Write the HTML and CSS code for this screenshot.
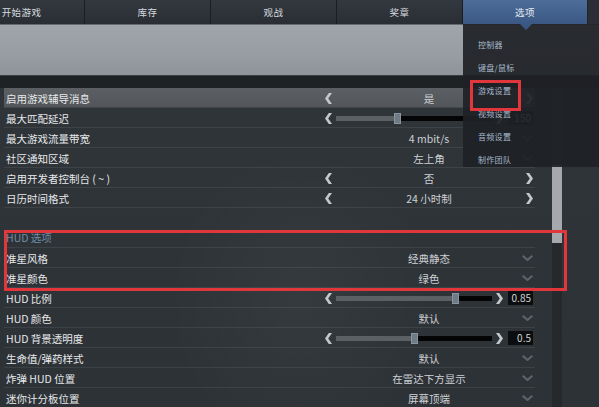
FILE: index.html
```html
<!DOCTYPE html>
<html lang="zh-CN">
<head>
<meta charset="utf-8">
<title>选项 - 游戏设置</title>
<link rel="stylesheet" href="styles.css">
</head>
<body>
<div class="screen">
  <nav class="nav">
    <div class="tab">开始游戏</div>
    <div class="tab">库存</div>
    <div class="tab">观战</div>
    <div class="tab">奖章</div>
    <div class="tab active">选项</div>
    <div class="tab rest"></div>
  </nav>
  <div class="banner"></div>
  <div class="strip"></div>

  <div class="content">
    <div class="list">
      <div class="group">
        <div class="row hl">
          <span class="label">启用游戏辅导消息</span>
          <div class="ctl">
            <svg class="arr l" viewBox="0 0 7 11"><polygon points="7,0 3.2,5.5 7,11 3.8,11 0,5.5 3.8,0"/></svg>
            <span class="val">是</span>
            <svg class="arr r" viewBox="0 0 7 11"><polygon points="0,0 3.8,5.5 0,11 3.2,11 7,5.5 3.2,0"/></svg>
          </div>
        </div>
        <div class="row">
          <span class="label">最大匹配延迟</span>
          <div class="slider">
            <svg class="arr" viewBox="0 0 7 11"><polygon points="7,0 3.2,5.5 7,11 3.8,11 0,5.5 3.8,0"/></svg>
            <div class="track"><div class="fill" style="width:39%"><div class="thumb"></div></div></div>
            <svg class="arr" viewBox="0 0 7 11"><polygon points="0,0 3.8,5.5 0,11 3.2,11 7,5.5 3.2,0"/></svg>
            <span class="num">150</span>
          </div>
        </div>
        <div class="row">
          <span class="label">最大游戏流量带宽</span>
          <div class="ctl">
            <span class="val">4 mbit/s</span>
            <svg class="chev" viewBox="0 0 11 6"><polyline points="0.7,0.7 5.5,5 10.3,0.7"/></svg>
          </div>
        </div>
        <div class="row">
          <span class="label">社区通知区域</span>
          <div class="ctl">
            <span class="val">左上角</span>
            <svg class="chev" viewBox="0 0 11 6"><polyline points="0.7,0.7 5.5,5 10.3,0.7"/></svg>
          </div>
        </div>
        <div class="row">
          <span class="label">启用开发者控制台 ( ~ )</span>
          <div class="ctl">
            <svg class="arr l" viewBox="0 0 7 11"><polygon points="7,0 3.2,5.5 7,11 3.8,11 0,5.5 3.8,0"/></svg>
            <span class="val">否</span>
            <svg class="arr r" viewBox="0 0 7 11"><polygon points="0,0 3.8,5.5 0,11 3.2,11 7,5.5 3.2,0"/></svg>
          </div>
        </div>
        <div class="row">
          <span class="label">日历时间格式</span>
          <div class="ctl">
            <svg class="arr l" viewBox="0 0 7 11"><polygon points="7,0 3.2,5.5 7,11 3.8,11 0,5.5 3.8,0"/></svg>
            <span class="val">24 小时制</span>
            <svg class="arr r" viewBox="0 0 7 11"><polygon points="0,0 3.8,5.5 0,11 3.2,11 7,5.5 3.2,0"/></svg>
          </div>
        </div>
      </div>

      <div class="group">
        <div class="row head"><span class="label">HUD 选项</span></div>
        <div class="row">
          <span class="label">准星风格</span>
          <div class="ctl">
            <span class="val">经典静态</span>
            <svg class="chev" viewBox="0 0 11 6"><polyline points="0.7,0.7 5.5,5 10.3,0.7"/></svg>
          </div>
        </div>
        <div class="row">
          <span class="label">准星颜色</span>
          <div class="ctl">
            <span class="val">绿色</span>
            <svg class="chev" viewBox="0 0 11 6"><polyline points="0.7,0.7 5.5,5 10.3,0.7"/></svg>
          </div>
        </div>
        <div class="row">
          <span class="label">HUD 比例</span>
          <div class="slider">
            <svg class="arr" viewBox="0 0 7 11"><polygon points="7,0 3.2,5.5 7,11 3.8,11 0,5.5 3.8,0"/></svg>
            <div class="track"><div class="fill" style="width:76%"><div class="thumb"></div></div></div>
            <svg class="arr" viewBox="0 0 7 11"><polygon points="0,0 3.8,5.5 0,11 3.2,11 7,5.5 3.2,0"/></svg>
            <span class="num">0.85</span>
          </div>
        </div>
        <div class="row">
          <span class="label">HUD 颜色</span>
          <div class="ctl">
            <span class="val">默认</span>
            <svg class="chev" viewBox="0 0 11 6"><polyline points="0.7,0.7 5.5,5 10.3,0.7"/></svg>
          </div>
        </div>
        <div class="row">
          <span class="label">HUD 背景透明度</span>
          <div class="slider">
            <svg class="arr" viewBox="0 0 7 11"><polygon points="7,0 3.2,5.5 7,11 3.8,11 0,5.5 3.8,0"/></svg>
            <div class="track"><div class="fill" style="width:50%"><div class="thumb"></div></div></div>
            <svg class="arr" viewBox="0 0 7 11"><polygon points="0,0 3.8,5.5 0,11 3.2,11 7,5.5 3.2,0"/></svg>
            <span class="num">0.5</span>
          </div>
        </div>
        <div class="row">
          <span class="label">生命值/弹药样式</span>
          <div class="ctl">
            <span class="val">默认</span>
            <svg class="chev" viewBox="0 0 11 6"><polyline points="0.7,0.7 5.5,5 10.3,0.7"/></svg>
          </div>
        </div>
        <div class="row">
          <span class="label">炸弹 HUD 位置</span>
          <div class="ctl">
            <span class="val">在雷达下方显示</span>
            <svg class="chev" viewBox="0 0 11 6"><polyline points="0.7,0.7 5.5,5 10.3,0.7"/></svg>
          </div>
        </div>
        <div class="row">
          <span class="label">迷你计分板位置</span>
          <div class="ctl">
            <span class="val">屏幕顶端</span>
            <svg class="chev" viewBox="0 0 11 6"><polyline points="0.7,0.7 5.5,5 10.3,0.7"/></svg>
          </div>
        </div>
      </div>
    </div>

    <div class="scroll"><div class="thumb-bar"></div></div>
  </div>

  <div class="menu">
    <span class="notch"></span>
    <div class="item">控制器</div>
    <div class="item">键盘/鼠标</div>
    <div class="item">游戏设置</div>
    <div class="item">视频设置</div>
    <div class="item">音频设置</div>
    <div class="item">制作团队</div>
  </div>

  <div class="mark mark-menu"></div>
  <div class="mark mark-hud"></div>
</div>
</body>
</html>
```

FILE: styles.css
```css
* { box-sizing: border-box; }

html, body {
  margin: 0;
  padding: 0;
  background: #2f3439;
}

.screen {
  position: relative;
  width: 599px;
  height: 407px;
  overflow: hidden;
  font-family: "Noto Sans CJK SC", "Noto Sans", "Liberation Sans", sans-serif;
  color: #e2e5e8;
  background:
    radial-gradient(ellipse 190px 220px at 300px 300px, rgba(255,255,255,0.035), rgba(255,255,255,0) 70%),
    linear-gradient(180deg, #30353a 0%, #2d3237 100%);
}

/* top navigation */
.nav {
  display: flex;
  height: 24px;
  margin-left: -41px;
  background: linear-gradient(180deg, #333840 0%, #2a2e34 100%);
}
.tab {
  flex: 0 0 126px;
  height: 24px;
  display: flex;
  align-items: center;
  justify-content: center;
  font-size: 9.5px;
  letter-spacing: 0.4px;
  color: #d6dadf;
  border-right: 1px solid #1a1d21;
}
.tab.active {
  flex-basis: 125px;
  background: linear-gradient(180deg, #4d6e99 0%, #3a5883 100%);
  color: #e8edf3;
  border-right: 1px solid #20252b;
}
.tab.rest { flex: 1 0 auto; border-right: 0; background: #2b2f35; }

.banner {
  height: 51px;
  border-top: 1px solid #646a70;
  background: linear-gradient(180deg, #a0a5ab 0%, #989da3 60%, #8f949a 100%);
}
.strip {
  height: 13px;
  background: #1f2225;
  border-top: 1px solid #3a3e42;
}

/* settings list */
.content {
  display: flex;
  align-items: stretch;
  height: 319px;
}
.list {
  width: 531px;
  margin-left: 4px;
  display: flex;
  flex-direction: column;
  gap: 20px;
}
.row {
  display: grid;
  grid-template-columns: 318px 213px;
  align-items: center;
  height: 20px;
  border-bottom: 1px solid rgba(255,255,255,0.075);
}
.row.hl {
  background: linear-gradient(180deg, #5c6064 0%, #52565a 100%);
  border-bottom-color: rgba(0,0,0,0.25);
}
.label {
  padding-left: 2px;
  font-size: 10.5px;
  color: #e6e8ea;
  white-space: nowrap;
}
.row.head .label { color: #6f8ea7; }

.ctl {
  display: grid;
  grid-template-columns: 11px 1fr 11px;
  align-items: center;
  height: 20px;
  padding: 0 2px 0 3px;
}
.val {
  grid-column: 2;
  text-align: center;
  font-size: 10.5px;
  color: #cdd1d5;
  white-space: nowrap;
}
.arr {
  width: 7px;
  height: 11px;
  fill: #c4c8cc;
}
.arr.l { grid-column: 1; justify-self: start; }
.arr.r { grid-column: 3; justify-self: end; }
.chev {
  grid-column: 3;
  width: 11px;
  height: 6px;
  fill: none;
  stroke: #5d646b;
  stroke-width: 2;
}

/* slider rows */
.slider {
  display: flex;
  align-items: center;
  height: 20px;
  padding: 0 2px 0 3px;
}
.slider .arr { flex: 0 0 7px; }
.track {
  flex: 0 0 156px;
  height: 5px;
  margin: 0 4px;
  background: #050505;
}
.fill {
  position: relative;
  height: 100%;
  background: #5b6065;
}
.thumb {
  position: absolute;
  top: -3px;
  right: -4px;
  width: 7px;
  height: 11px;
  background: #6f7b86;
  border: 1px solid #8a949d;
}
.num {
  flex: 0 0 25px;
  height: 14px;
  margin-left: 5px;
  padding-right: 2px;
  background: #0c0d0e;
  font-size: 10px;
  line-height: 14px;
  text-align: right;
  color: #d3d6d9;
}

/* scrollbar */
.scroll {
  width: 10px;
  margin-left: 17px;
  background: linear-gradient(180deg, #3b4045 0%, #3b4045 24%, #26292c 24%);
}
.thumb-bar {
  margin-top: 77px;
  height: 78px;
  background: #a5a9ad;
}

/* options dropdown */
.menu {
  position: absolute;
  left: 463px;
  top: 24px;
  width: 136px;
  height: 143px;
  padding-top: 9px;
  background: rgba(30,33,37,0.92);
}
.notch {
  position: absolute;
  left: 57px;
  top: 0;
  width: 0;
  height: 0;
  border-left: 6px solid transparent;
  border-right: 6px solid transparent;
  border-top: 6px solid #3a5883;
}
.item {
  height: 23px;
  line-height: 23px;
  padding-left: 15px;
  font-size: 8px;
  letter-spacing: 0.3px;
  color: #a9bacd;
}

/* red highlight frames */
.mark {
  position: absolute;
  border: 3px solid #e0363c;
}
.mark-menu { left: 470px; top: 80px; width: 51px; height: 31px; }
.mark-hud { left: 4px; top: 230px; width: 563px; height: 61px; }
```
